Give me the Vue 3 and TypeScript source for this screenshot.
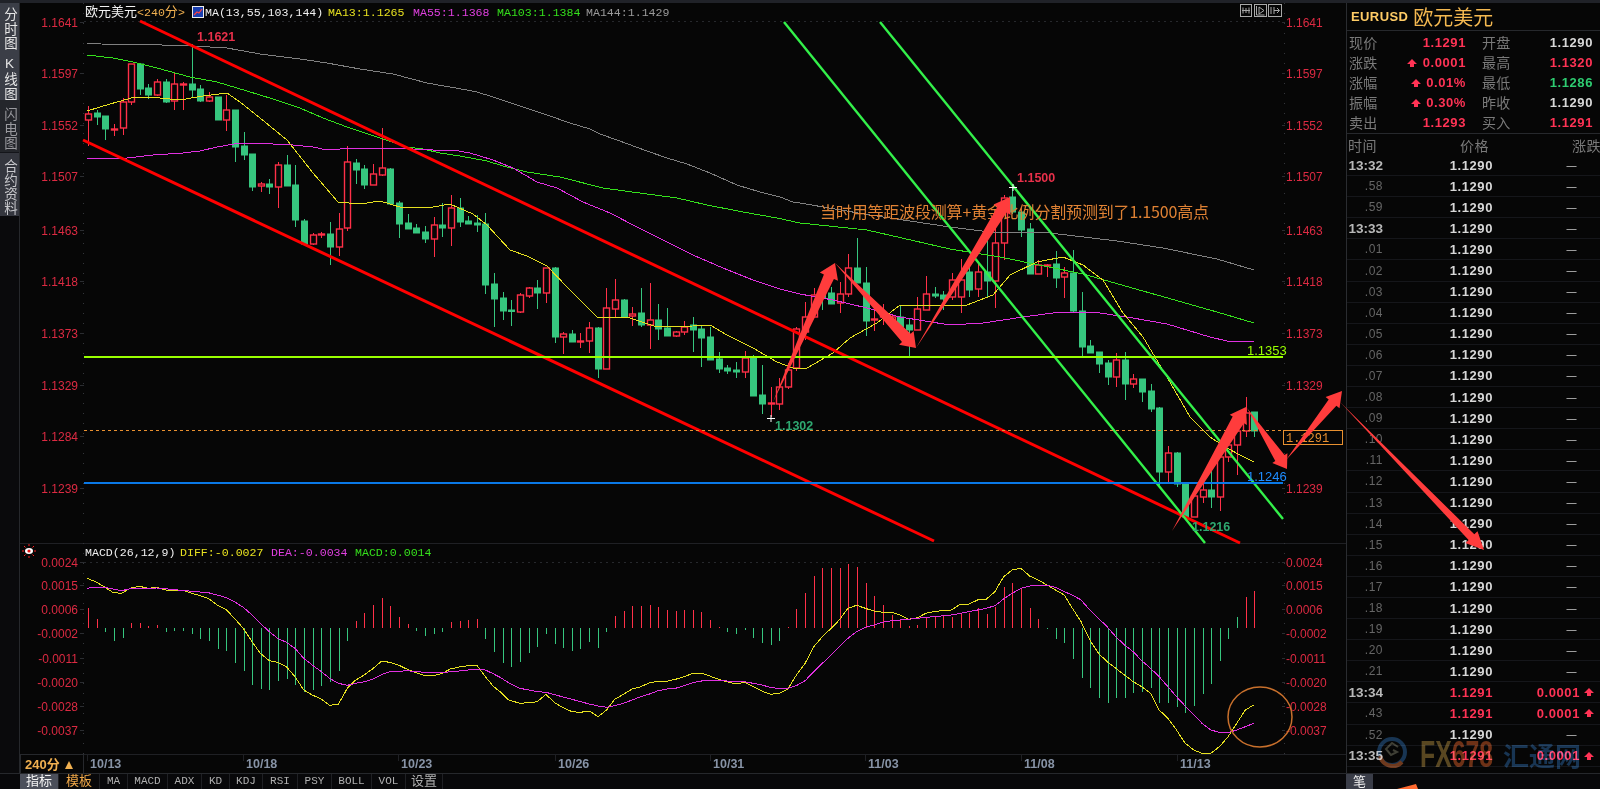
<script setup lang="ts">
// candle = [high, bodyTop, bodyBottom, low, isUp] in chart pixels
type Candle = [number, number, number, number, number]

const candleData: Candle[] = [
  [106, 114, 120, 146, 1], [110, 113, 117, 125, 0], [116, 116, 129, 140, 0], [124, 129, 129.5, 136, 1],
  [98, 102, 128, 135, 1], [64, 64, 102, 105, 1], [63, 64, 89, 95, 0], [84, 88, 95, 99, 0],
  [79, 82, 95, 96, 1], [79, 82, 102, 103, 0], [72, 84, 101, 110, 1], [82, 84, 84.5, 110, 1],
  [44, 84, 90, 98, 0], [85, 89, 101, 102, 0], [92, 97, 101, 102, 1], [97, 97, 120, 120, 0],
  [95, 110, 120, 131, 1], [110, 110, 147, 162, 0], [132, 146, 155, 160, 0], [154, 154, 187, 191, 0],
  [182, 184, 186, 192, 1], [179, 184, 187, 194, 0], [162, 165, 187, 208, 1], [155, 165, 186, 186, 0],
  [165, 185, 220, 227, 0], [219, 221, 244, 244, 0], [233, 235, 244, 245, 1], [232, 234, 235, 238, 1],
  [222, 234, 247, 265, 0], [213, 229, 247, 256, 1], [146, 162, 228, 231, 1], [159, 163, 170, 184, 0],
  [165, 169, 185, 189, 0], [164, 174, 185, 185, 1], [128, 168, 175, 176, 1], [168, 169, 204, 204, 0],
  [201, 203, 224, 238, 0], [214, 223, 229, 229, 0], [224, 228, 233, 233, 0], [226, 232, 239, 243, 0],
  [217, 225, 239, 257, 1], [203, 225, 228, 237, 0], [195, 208, 228, 246, 1], [198, 208, 222, 227, 0],
  [216, 221, 224, 224, 0], [215, 223, 225, 232, 0], [213, 224, 285, 294, 0], [273, 284, 299, 327, 0],
  [292, 298, 311, 320, 0], [300, 310, 311.5, 326, 0], [293, 295, 312, 313, 1], [287, 288, 296, 298, 1],
  [280, 288, 293, 309, 0], [268, 268, 293, 303, 1], [267, 268, 337, 343, 0], [332, 334, 337, 354, 1],
  [330, 334, 342, 342, 0], [333, 341, 341.5, 348, 1], [322, 328, 341, 353, 1], [327, 328, 369, 378, 0],
  [288, 308, 369, 369, 1], [279, 300, 309, 317, 1], [299, 300, 317, 317, 0], [307, 314, 316, 326, 1],
  [288, 313, 325, 327, 0], [283, 320, 325, 349, 1], [304, 320, 329, 340, 0], [308, 328, 336, 336, 0],
  [331, 332, 336, 337, 1], [321, 327, 332, 335, 1], [317, 325, 330, 352, 0], [326, 329, 338, 367, 0],
  [327, 337, 360, 360, 0], [352, 359, 369, 373, 0], [365, 368, 371, 374, 0], [362, 370, 372, 378, 0],
  [351, 358, 372, 378, 1], [355, 357, 396, 396, 0], [365, 395, 404, 414, 0], [387, 403, 404, 417, 1],
  [378, 387, 404, 410, 1], [363, 370, 387, 389, 1], [327, 329, 368, 371, 1], [302, 317, 332, 340, 1],
  [288, 295, 317, 317, 1], [288, 295, 298, 310, 0], [287, 293, 304, 304, 0], [282, 294, 303, 313, 1],
  [254, 268, 294, 297, 1], [238, 268, 283, 283, 0], [267, 283, 321, 336, 0], [307, 319, 320, 331, 1],
  [304, 315, 317, 325, 1], [315, 317, 320, 322, 1], [306, 317, 327, 330, 0], [318, 325, 330, 356, 0],
  [297, 309, 330, 330, 1], [276, 294, 310, 310, 1], [287, 294, 296, 298, 0], [291, 295, 299, 310, 0],
  [273, 280, 297, 300, 1], [259, 280, 297, 313, 1], [262, 272, 290, 297, 0], [263, 272, 289, 297, 1],
  [230, 272, 281, 298, 0], [213, 243, 281, 308, 1], [195, 198, 243, 260, 1], [187, 197, 212, 214, 0],
  [212, 212, 230, 237, 0], [223, 229, 274, 274, 0], [260, 265, 274, 274, 1], [264, 265, 266, 277, 1],
  [251, 264, 278, 288, 0], [267, 273, 277, 298, 1], [250, 273, 311, 313, 0], [292, 311, 347, 358, 0],
  [340, 346, 353, 353, 0], [352, 352, 364, 373, 0], [360, 363, 377, 385, 0], [353, 360, 377, 387, 1],
  [352, 360, 384, 400, 0], [374, 379, 384, 388, 1], [379, 379, 392, 402, 0], [384, 391, 409, 412, 0],
  [407, 408, 472, 485, 0], [446, 453, 472, 483, 1], [452, 453, 484, 487, 0], [483, 483, 517, 518, 0],
  [495, 496, 517, 517, 1], [483, 490, 497, 503, 1], [471, 490, 497, 508, 0], [457, 457, 497, 511, 1],
  [440, 445, 457, 462, 1], [430, 431, 445, 475, 1], [397, 413, 431, 437, 1], [412, 412, 431, 437, 0]
]

const STEP = 8.64
const X0 = 88
const barX = (i: number) => Math.round(X0 + i * STEP) + 0.5

const candles = candleData.map((c, i) => ({
  x: barX(i), high: c[0], top: c[1], bottom: c[2], low: c[3], up: c[4] === 1
}))

// MACD histogram: the y where each bar ends, baseline at 628
const MACD_ZERO = 628
const histEnds = [
  608, 619, 632, 641, 638, 623, 623, 626, 625, 632, 631, 631, 634, 639, 641, 649, 651, 663, 671, 685,
  689, 690, 681, 679, 685, 692, 690, 686, 682, 671, 641, 621, 613, 605, 598, 606, 617, 624, 631, 636,
  634, 632, 622, 621, 620, 619, 639, 652, 663, 667, 662, 653, 647, 634, 644, 648, 651, 649, 642, 648,
  632, 616, 611, 606, 606, 605, 607, 610, 611, 610, 610, 612, 620, 627, 632, 634, 630, 638, 643, 645,
  641, 627, 609, 593, 576, 568, 568, 568, 564, 567, 583, 596, 605, 615, 620, 626, 625, 618, 617, 615,
  617, 613, 613, 608, 614, 607, 587, 583, 588, 608, 619, 629, 639, 643, 659, 678, 688, 698, 703, 698,
  698, 693, 692, 688, 703, 703, 707, 713, 706, 694, 684, 661, 639, 617, 597, 591
]
const histBars = histEnds.map((y, i) => ({
  x: barX(i), y, up: y < MACD_ZERO && i !== 133
}))

const pts = (a: number[][]) => a.map((p) => p.join(',')).join(' ')

const ma144 = pts([
  [87, 43], [101, 44], [162, 45], [192, 46], [227, 48], [260, 54], [300, 59], [327, 63], [360, 69], [393, 74], [427, 83],
  [467, 90], [477, 92], [493, 97], [523, 107], [547, 115], [570, 123], [590, 129], [600, 134], [617, 140], [647, 151],
  [667, 158], [687, 164], [710, 173], [737, 185], [760, 192], [780, 197], [793, 202], [800, 203], [870, 215], [950, 227],
  [990, 232], [1050, 233], [1117, 241], [1163, 248], [1217, 259], [1254, 270]
])
const ma103 = pts([
  [87, 55], [113, 58], [133, 62], [157, 68], [190, 77], [217, 82], [247, 91], [273, 99], [300, 108], [323, 118],
  [347, 127], [377, 137], [407, 147], [423, 149], [440, 153], [460, 156], [487, 161], [503, 166], [527, 172], [560, 177],
  [603, 188], [647, 194], [677, 198], [707, 205], [743, 212], [777, 218], [800, 223], [867, 230], [950, 249], [1000, 257],
  [1083, 274], [1150, 293], [1217, 312], [1254, 323]
])
const ma55 = pts([
  [87, 158], [127, 158], [153, 155], [183, 153], [200, 151], [217, 147], [240, 143], [273, 144], [293, 145], [313, 147],
  [327, 150], [353, 148], [393, 148], [433, 150], [453, 150], [470, 153], [493, 160], [513, 168], [537, 182], [557, 188],
  [583, 202], [610, 213], [637, 227], [663, 240], [693, 255], [723, 268], [753, 280], [780, 289], [800, 294], [833, 300],
  [867, 308], [900, 317], [950, 325], [983, 323], [1023, 317], [1060, 312], [1093, 312], [1127, 317], [1167, 324],
  [1210, 337], [1227, 341], [1254, 342]
])
const ma13 = pts([
  [87, 111], [110, 104], [135, 97], [160, 98], [180, 100], [203, 96], [227, 93], [240, 102], [260, 118], [287, 140],
  [313, 173], [338, 202], [360, 204], [380, 201], [403, 208], [433, 207], [450, 204], [473, 214], [487, 225], [510, 250],
  [527, 256], [547, 266], [567, 287], [597, 317], [610, 317], [627, 317], [657, 327], [693, 326], [710, 325], [727, 335],
  [753, 348], [777, 362], [793, 368], [807, 368], [833, 353], [850, 338], [877, 323], [900, 305], [950, 305], [967, 305],
  [993, 295], [1010, 275], [1037, 262], [1063, 257], [1083, 265], [1103, 280], [1123, 313], [1143, 337], [1167, 377],
  [1190, 417], [1210, 437], [1227, 448], [1240, 455], [1254, 462]
])

// MACD lines were read off two crops of different scale
const fromLeft = (a: number[][]) => a.map(([x, y]) => [x / 3, 530 + y / 3])
const fromRight = (a: number[][]) => a.map(([x, y]) => [500 + x / 1.96, 540 + y / 3])
const round = (a: number[][]) => a.map(([x, y]) => [Math.round(x * 10) / 10, Math.round(y * 10) / 10])

const diffLine = pts(round([
  ...fromLeft([
    [262, 145], [290, 157], [315, 172], [340, 188], [365, 190], [390, 175], [418, 169], [445, 175], [470, 172], [497, 180],
    [525, 181], [550, 181], [575, 190], [600, 197], [625, 205], [652, 225], [680, 240], [703, 265], [730, 295], [756, 335],
    [781, 370], [808, 392], [833, 397], [859, 410], [885, 440], [911, 480], [937, 495], [964, 507], [989, 526], [1015, 523],
    [1042, 475], [1067, 450], [1093, 435], [1120, 415], [1144, 394], [1170, 397], [1195, 405], [1222, 418], [1249, 428],
    [1274, 437], [1300, 437], [1327, 430], [1351, 417], [1378, 411], [1404, 407], [1430, 405], [1456, 440], [1481, 470]
  ]),
  ...fromRight([
    [0, 455], [17, 480], [39, 490], [56, 488], [73, 485], [90, 463], [107, 488], [124, 503], [141, 515], [158, 517],
    [175, 513], [192, 530], [209, 510], [225, 478], [242, 463], [259, 447], [276, 440], [293, 428], [310, 424], [327, 424],
    [344, 418], [361, 410], [378, 400], [395, 400], [411, 408], [428, 418], [445, 425], [462, 432], [479, 427], [496, 440],
    [513, 453], [530, 463], [547, 460], [564, 447], [581, 405], [598, 370], [615, 320], [632, 290], [649, 265], [665, 240],
    [682, 205], [699, 196], [716, 205], [733, 213], [750, 217], [767, 217], [784, 225], [801, 238], [818, 233], [835, 220],
    [852, 214], [869, 212], [885, 210], [902, 193], [919, 192], [936, 180], [953, 178], [970, 155], [987, 110], [1004, 90],
    [1021, 85], [1038, 108], [1055, 120], [1072, 135], [1089, 150], [1106, 165], [1122, 205], [1139, 245], [1156, 300],
    [1173, 340], [1190, 365], [1207, 385], [1224, 405], [1241, 425], [1258, 440], [1275, 460], [1292, 510], [1309, 535],
    [1326, 570], [1343, 610], [1360, 630], [1376, 640], [1393, 640], [1410, 620], [1427, 590], [1444, 550], [1461, 510], [1477, 495]
  ])
]))

const deaLine = pts(round([
  ...fromLeft([
    [262, 175], [290, 171], [315, 172], [340, 177], [365, 182], [390, 176], [418, 175], [470, 174], [525, 179], [575, 184],
    [625, 188], [652, 195], [680, 203], [703, 215], [730, 232], [756, 255], [781, 280], [808, 305], [833, 325], [859, 337],
    [885, 355], [911, 385], [937, 405], [964, 425], [989, 445], [1015, 460], [1042, 466], [1067, 460], [1093, 455], [1120, 447],
    [1144, 434], [1170, 425], [1195, 424], [1222, 422], [1249, 425], [1274, 427], [1300, 427], [1327, 428], [1351, 425],
    [1378, 423], [1404, 420], [1430, 417], [1456, 420], [1481, 432]
  ]),
  ...fromRight([
    [0, 412], [17, 428], [39, 445], [56, 450], [73, 455], [90, 457], [107, 464], [124, 471], [141, 478], [158, 485], [175, 492],
    [192, 498], [209, 502], [225, 497], [242, 490], [259, 480], [276, 470], [293, 462], [310, 452], [327, 447], [344, 445],
    [361, 437], [378, 428], [395, 423], [411, 421], [428, 421], [445, 423], [462, 425], [479, 425], [496, 430], [513, 435],
    [530, 442], [547, 446], [564, 445], [581, 437], [598, 422], [615, 395], [632, 370], [649, 345], [665, 320], [682, 295],
    [699, 275], [716, 262], [733, 255], [750, 247], [767, 242], [784, 240], [801, 238], [818, 235], [835, 232], [852, 230],
    [869, 227], [885, 225], [902, 220], [919, 215], [936, 210], [953, 205], [970, 197], [987, 177], [1004, 160], [1021, 145],
    [1038, 138], [1055, 136], [1072, 136], [1089, 142], [1106, 155], [1122, 165], [1139, 180], [1156, 210], [1173, 235],
    [1190, 260], [1207, 290], [1224, 315], [1241, 335], [1258, 362], [1275, 385], [1292, 410], [1309, 440], [1326, 470],
    [1343, 498], [1360, 525], [1376, 550], [1393, 570], [1410, 577], [1427, 578], [1444, 570], [1461, 560], [1477, 550]
  ])
]))

const priceLabels = [
  { text: '1.1641', y: 22 }, { text: '1.1597', y: 73 }, { text: '1.1552', y: 125 }, { text: '1.1507', y: 176 },
  { text: '1.1463', y: 230 }, { text: '1.1418', y: 281 }, { text: '1.1373', y: 333 }, { text: '1.1329', y: 385 },
  { text: '1.1284', y: 436 }, { text: '1.1239', y: 488 }
]
const macdLabels = [
  { text: '0.0024', y: 562 }, { text: '0.0015', y: 585 }, { text: '0.0006', y: 609 }, { text: '-0.0002', y: 633 },
  { text: '-0.0011', y: 658 }, { text: '-0.0020', y: 682 }, { text: '-0.0028', y: 706 }, { text: '-0.0037', y: 730 }
]
const axisLabels = [...priceLabels, ...macdLabels]
// the right axis has the last price tag where 1.1284 would be
const rightLabels = axisLabels.filter((l) => l.text !== '1.1284')

const dates = [
  { text: '10/13', x: 87 }, { text: '10/18', x: 243 }, { text: '10/23', x: 398 }, { text: '10/26', x: 555 },
  { text: '10/31', x: 710 }, { text: '11/03', x: 865 }, { text: '11/08', x: 1021 }, { text: '11/13', x: 1177 }
]

// tapered hand-drawn arrow as a polygon
function arrow(x1: number, y1: number, x2: number, y2: number, shaft = 5, head = 9, len = 16): string {
  const d = Math.hypot(x2 - x1, y2 - y1)
  const ux = (x2 - x1) / d
  const uy = (y2 - y1) / d
  const nx = -uy
  const ny = ux
  const bx = x2 - ux * len
  const by = y2 - uy * len
  const p = [
    [x1, y1],
    [bx + nx * shaft, by + ny * shaft],
    [bx + nx * head, by + ny * head],
    [x2, y2],
    [bx - nx * head, by - ny * head],
    [bx - nx * shaft, by - ny * shaft]
  ]
  return pts(round(p))
}

const arrows = [
  arrow(773, 402, 835, 263, 5.5, 10, 15),
  arrow(835, 263, 916, 348, 6, 10, 14),
  arrow(916, 348, 1010, 197, 5.5, 10, 15),
  arrow(1172, 531, 1246, 407, 6.5, 10, 15),
  arrow(1247, 408, 1287, 469, 5.5, 9, 13),
  arrow(1286, 460, 1342, 391, 5, 9, 15),
  arrow(1340, 402, 1484, 550, 4, 8.5, 18)
]

interface Quote { label: string; value: string; color: string; arrow?: boolean }
const quotes: Quote[][] = [
  [{ label: '现价', value: '1.1291', color: 'red' }, { label: '开盘', value: '1.1290', color: 'white' }],
  [{ label: '涨跌', value: '0.0001', color: 'red', arrow: true }, { label: '最高', value: '1.1320', color: 'red' }],
  [{ label: '涨幅', value: '0.01%', color: 'red', arrow: true }, { label: '最低', value: '1.1286', color: 'green' }],
  [{ label: '振幅', value: '0.30%', color: 'red', arrow: true }, { label: '昨收', value: '1.1290', color: 'white' }],
  [{ label: '卖出', value: '1.1293', color: 'red' }, { label: '买入', value: '1.1291', color: 'red' }]
]

interface Tick { time: string; minute?: boolean; up?: boolean }
const ticks: Tick[] = [
  { time: '13:32', minute: true }, { time: '.58' }, { time: '.59' }, { time: '13:33', minute: true },
  { time: '.01' }, { time: '.02' }, { time: '.03' }, { time: '.04' }, { time: '.05' }, { time: '.06' },
  { time: '.07' }, { time: '.08' }, { time: '.09' }, { time: '.10' }, { time: '.11' }, { time: '.12' },
  { time: '.13' }, { time: '.14' }, { time: '.15' }, { time: '.16' }, { time: '.17' }, { time: '.18' },
  { time: '.19' }, { time: '.20' }, { time: '.21' }, { time: '13:34', minute: true, up: true },
  { time: '.43', up: true }, { time: '.52' }, { time: '13:35', minute: true, up: true }
]

const railTabs = [
  { text: '分时图', cls: 'tab-light' },
  { text: 'K线图', cls: 'tab-light' },
  { text: '闪电图', cls: 'tab-dim' },
  { text: '合约资料', cls: 'tab-mid' }
]

const bottomTabs = [
  { text: '指标', width: 39, cls: 'active' },
  { text: '模板', width: 41, cls: 'orange' },
  { text: 'MA', width: 28, cls: '' },
  { text: 'MACD', width: 40, cls: '' },
  { text: 'ADX', width: 34, cls: '' },
  { text: 'KD', width: 28, cls: '' },
  { text: 'KDJ', width: 33, cls: '' },
  { text: 'RSI', width: 35, cls: '' },
  { text: 'PSY', width: 34, cls: '' },
  { text: 'BOLL', width: 40, cls: '' },
  { text: 'VOL', width: 34, cls: '' },
  { text: '设置', width: 37, cls: '' }
]
</script>

<template>
  <div class="terminal">
    <div class="top-strip"></div>

    <div class="workspace">
      <!-- Left Rail -->
      <nav class="rail">
        <div v-for="tab in railTabs" :key="tab.text" :class="['rail-tab', tab.cls]">{{ tab.text }}</div>
        <div class="rail-rest"></div>
      </nav>

      <!-- Chart -->
      <div class="chart">
        <svg class="chart-svg" width="1326" height="771" viewBox="20 3 1326 771">
          <!-- frame lines -->
          <line x1="20" y1="543.5" x2="1346" y2="543.5" class="frame" />
          <line x1="20" y1="754.5" x2="1346" y2="754.5" class="frame" />
          <line x1="83.5" y1="3" x2="83.5" y2="774" class="axis-dots" />
          <line x1="1284.5" y1="3" x2="1284.5" y2="754" class="axis-dots" />
          <line x1="84" y1="21.5" x2="1284" y2="21.5" class="grid-dash" />
          <line x1="84" y1="562.5" x2="1284" y2="562.5" class="grid-dash" />
          <line v-for="l in axisLabels" :key="'t' + l.text" x1="80" :y1="l.y + 0.5" x2="84" :y2="l.y + 0.5" class="tick" />
          <line v-for="l in rightLabels" :key="'u' + l.text" x1="1282" :y1="l.y + 0.5" x2="1285" :y2="l.y + 0.5" class="tick" />

          <!-- header -->
          <text x="85" y="16" class="head white"><tspan class="cjk">欧元美元</tspan><tspan class="orange-fill">&lt;240<tspan class="cjk">分</tspan>&gt;</tspan></text>
          <g>
            <rect x="192.5" y="6.5" width="11" height="11" fill="#1a3fb0" stroke="#eee" />
            <path d="M194 15l3-3 2 1 3-4" fill="none" stroke="#ff4040" stroke-width="1.2" />
          </g>
          <text x="205" y="16" class="head white">MA(13,55,103,144)</text>
          <text x="328" y="16" class="head yellow">MA13:1.1265</text>
          <text x="413" y="16" class="head magenta">MA55:1.1368</text>
          <text x="497" y="16" class="head green-t">MA103:1.1384</text>
          <text x="586" y="16" class="head grey">MA144:1.1429</text>

          <g class="tool" transform="translate(1240 4)">
            <rect x="0.5" y="0.5" width="11" height="12" />
            <path d="M2 6.5h8M3 3.5v6M9 3.5v6M6 4v5" />
          </g>
          <g class="tool" transform="translate(1254 4)">
            <rect x="0.5" y="0.5" width="12" height="12" />
            <path d="M2.5 2v9h8M5 3l5 3.5-5 3.5z" />
          </g>
          <g class="tool" transform="translate(1268 4)">
            <rect x="0.5" y="0.5" width="13" height="12" />
            <path d="M3 3v7M6 3v7M6 6.5h5M9 4l2.5 2.5L9 9" />
          </g>

          <!-- candles -->
          <g v-for="(c, i) in candles" :key="i" :class="c.up ? 'candle-up' : 'candle-down'">
            <line :x1="c.x" :y1="c.high" :x2="c.x" :y2="c.top" class="wick" />
            <line :x1="c.x" :y1="c.bottom" :x2="c.x" :y2="c.low" class="wick" />
            <rect :x="c.x - 3" :y="c.top" width="6" :height="Math.max(c.bottom - c.top, 1)" class="body" />
          </g>

          <!-- moving averages -->
          <polyline :points="ma144" class="ma" stroke="#808080" />
          <polyline :points="ma103" class="ma" stroke="#35e01c" />
          <polyline :points="ma55" class="ma" stroke="#e030e0" />
          <polyline :points="ma13" class="ma" stroke="#e6e020" />

          <!-- drawn trend lines -->
          <line x1="140" y1="21" x2="1240" y2="543" class="trend" stroke="#ff0000" />
          <line x1="83" y1="140" x2="934" y2="541" class="trend" stroke="#ff0000" />
          <line x1="880" y1="22" x2="1283" y2="519" class="trend-thin" stroke="#33f04a" />
          <line x1="784" y1="22" x2="1205" y2="543" class="trend-thin" stroke="#33f04a" />
          <line x1="84" y1="357" x2="1283" y2="357" class="level" stroke="#99ff00" />
          <line x1="84" y1="483" x2="1283" y2="483" class="level" stroke="#0a78e6" />
          <line x1="84" y1="430.5" x2="1283" y2="430.5" class="last-price" />
          <rect x="1283.5" y="430.5" width="59" height="14" class="price-tag" />
          <text x="1286" y="441.5" class="tag-text">1.1291</text>

          <text x="1247" y="355" class="level-label" fill="#99ff00">1.1353</text>
          <text x="1247" y="481" class="level-label" fill="#1e8cff">1.1246</text>

          <!-- high / low marks -->
          <text x="197" y="41" class="mark" fill="#e8304a">1.1621</text>
          <text x="1017" y="182" class="mark" fill="#e8304a">1.1500</text>
          <text x="775" y="430" class="mark" fill="#2ea870">1.1302</text>
          <text x="1192" y="531" class="mark" fill="#2ea870">1.1216</text>
          <path d="M767 418.5h8M771 415v7M1009 187.5h8M1013 184v7" stroke="#fff" fill="none" />

          <text x="820" y="218" class="note" textLength="389">当时用等距波段测算+黄金比例分割预测到了1.1500高点</text>

          <!-- macd -->
          <g :transform="'translate(29 551)'">
            <ellipse rx="4" ry="3" fill="#fff" />
            <circle r="1.6" fill="#e01010" />
            <path d="M0-7v2M0 5v2M-7 0h2M5 0h2M-5-5l1.5 1.5M5-5l-1.5 1.5M-5 5l1.5-1.5M5 5l-1.5-1.5" stroke="#ff2020" fill="none" />
          </g>
          <text x="85" y="556" class="head white">MACD(26,12,9)</text>
          <text x="180" y="556" class="head yellow">DIFF:-0.0027</text>
          <text x="271" y="556" class="head magenta">DEA:-0.0034</text>
          <text x="355" y="556" class="head green-t">MACD:0.0014</text>

          <line
            v-for="(b, i) in histBars"
            :key="'h' + i"
            :x1="b.x"
            :y1="b.y"
            :x2="b.x"
            :y2="MACD_ZERO"
            :stroke="b.up ? '#ff3048' : '#36c67e'"
          />
          <polyline :points="diffLine" class="ma" stroke="#e6e020" />
          <polyline :points="deaLine" class="ma" stroke="#e030e0" />

          <!-- axes text -->
          <text v-for="l in axisLabels" :key="'l' + l.text" x="78" :y="l.y + 4.5" class="axis-text" text-anchor="end">{{ l.text }}</text>
          <text v-for="l in rightLabels" :key="'r' + l.text" x="1286" :y="l.y + 4.5" class="axis-text">{{ l.text }}</text>

          <!-- dates -->
          <template v-for="d in dates" :key="d.text">
            <line :x1="d.x + 0.5" y1="755" :x2="d.x + 0.5" y2="761" class="frame" />
            <text :x="d.x + 3" y="768" class="date">{{ d.text }}</text>
          </template>

          <rect x="20.5" y="754.5" width="63" height="19" class="period-box" />
          <text x="25" y="769" class="period">240分</text>
          <path d="M65 769l4-8 4 8z" fill="#f0b050" />
        </svg>
      </div>

      <!-- Quote Panel -->
      <aside class="panel">
        <header class="panel-title">
          <span class="symbol">EURUSD</span>
          <span class="symbol-name">欧元美元</span>
        </header>

        <div class="quotes">
          <div v-for="(row, r) in quotes" :key="r" class="quote-row">
            <template v-for="q in row" :key="q.label">
              <span class="quote-label">{{ q.label }}</span>
              <span :class="['quote-value', q.color]">
                <svg v-if="q.arrow" class="up-arrow" width="10" height="8" viewBox="0 0 10 8">
                  <path d="M5 0l5 5H7v3H3V5H0z" />
                </svg>
                {{ q.value }}
              </span>
            </template>
          </div>
        </div>

        <div class="tick-head">
          <span>时间</span>
          <span>价格</span>
          <span>涨跌</span>
        </div>
        <div class="tick-list">
          <div v-for="(t, i) in ticks" :key="i" class="tick-row">
            <span :class="t.minute ? 'tick-minute' : 'tick-second'">{{ t.time }}</span>
            <span :class="['tick-price', t.up ? 'red' : 'white']">{{ t.up ? '1.1291' : '1.1290' }}</span>
            <span v-if="t.up" class="tick-change red">0.0001</span>
            <span v-else class="tick-change dash">—</span>
            <svg v-if="t.up" class="up-arrow" width="10" height="8" viewBox="0 0 10 8">
              <path d="M5 0l5 5H7v3H3V5H0z" />
            </svg>
          </div>
        </div>
      </aside>
    </div>

    <!-- Bottom Tabs -->
    <footer class="tabbar">
      <div class="tabs-left">
        <span
          v-for="tab in bottomTabs"
          :key="tab.text"
          :class="['bottom-tab', tab.cls]"
          :style="{ width: tab.width + 'px' }"
        >{{ tab.text }}</span>
      </div>
      <span class="pen-tab">笔</span>
    </footer>

    <!-- Annotations and watermark lying over everything -->
    <svg class="overlay" width="1600" height="789" viewBox="0 0 1600 789">
      <polygon v-for="(a, i) in arrows" :key="i" :points="a" fill="#ff3c3c" />
      <ellipse cx="1260" cy="717" rx="32" ry="30" fill="none" stroke="#c8702c" stroke-width="1.5" />
      <polygon points="1397,789 1416,784 1418,789" fill="#ff6a30" />
      <g class="watermark">
        <circle cx="1392" cy="752" r="13" fill="none" stroke="#12304f" stroke-width="4" />
        <path d="M1380 756a13 13 0 0 0 22 6" fill="none" stroke="#6a3418" stroke-width="4" />
        <path d="M1398 747l-6-4-6 6 5 6 6-3-4-2" fill="none" stroke="#3a3a30" stroke-width="2" />
        <text x="1420" y="767" class="wm-latin" textLength="73" lengthAdjust="spacingAndGlyphs">
          <tspan fill="#55431c">FX</tspan><tspan fill="#6a2c10">678</tspan>
        </text>
        <text x="1503" y="766" class="wm-cjk">汇通网</text>
      </g>
    </svg>
  </div>
</template>

<style scoped>
.terminal {
  position: relative;
  width: 1600px;
  height: 789px;
  display: flex;
  flex-direction: column;
  overflow: hidden;
  background: #060606;
  font-family: "Liberation Sans", "Noto Sans CJK SC", sans-serif;
}

.top-strip {
  height: 3px;
  flex-shrink: 0;
  background: #202228;
}

.workspace {
  flex: 1;
  display: flex;
  min-height: 0;
}

/* LEFT RAIL */
.rail {
  width: 20px;
  flex-shrink: 0;
  display: flex;
  flex-direction: column;
  background: #14151a;
  border-right: 1px solid #26282c;
  box-sizing: border-box;
}

.rail-tab {
  display: flex;
  align-items: center;
  justify-content: flex-start;
  box-sizing: border-box;
  writing-mode: vertical-lr;
  text-orientation: upright;
  white-space: nowrap;
  font-size: 13.5px;
  letter-spacing: 1.2px;
  line-height: 19px;
  width: 19px;
}

.tab-light {
  height: 48.5px;
  padding-top: 4px;
  background: #3b3e47;
  color: #e6e6e6;
}

.tab-dim {
  height: 52px;
  padding-top: 7px;
  color: #9a9a9f;
  background: #24262b;
  margin-bottom: 1px;
}

.tab-mid {
  height: 63px;
  padding-top: 6px;
  letter-spacing: 0.6px;
  color: #c8c8cc;
  background: #34363e;
}

.rail-rest {
  flex: 1;
  background: #0a0a0c;
}

/* CHART */
.chart {
  width: 1326px;
  flex-shrink: 0;
}

.chart-svg {
  display: block;
}

.frame {
  stroke: #1f2024;
}

.axis-dots {
  stroke: #33353a;
  stroke-dasharray: 1 9;
}

.grid-dash {
  stroke: #26282c;
  stroke-dasharray: 2 4;
}

.tick {
  stroke: #2a2c30;
}

.head {
  font-family: "Liberation Mono", "Noto Sans CJK SC", monospace;
  font-size: 11.6px;
}

.head .cjk {
  font-size: 13px;
}

.white { fill: #f0f0f0; }
.orange-fill { fill: #f0b050; }
.yellow { fill: #e6e020; }
.magenta { fill: #e040e0; }
.green-t { fill: #35e01c; }
.grey { fill: #9a9a9a; }

.tool rect,
.tool path {
  fill: none;
  stroke: #a8a8a8;
}

.candle-up .wick {
  stroke: #ff3048;
}

.candle-up .body {
  fill: #060606;
  stroke: #ff3048;
  stroke-width: 1.4;
}

.candle-down .wick {
  stroke: #36c67e;
}

.candle-down .body {
  fill: #36c67e;
  stroke: #36c67e;
  stroke-width: 1;
}

.ma {
  fill: none;
  stroke-width: 1;
  shape-rendering: crispEdges;
}

.trend {
  stroke-width: 3;
}

.trend-thin {
  stroke-width: 2.4;
}

.level {
  stroke-width: 2;
}

.last-price {
  stroke: #e89030;
  stroke-dasharray: 3 3;
}

.price-tag {
  fill: #060606;
  stroke: #e89030;
}

.tag-text {
  font-family: "Liberation Mono", monospace;
  font-size: 12px;
  fill: #e89030;
}

.level-label {
  font-size: 13px;
}

.mark {
  font-size: 12.5px;
  font-weight: 700;
}

.note {
  font-family: "Noto Sans CJK SC", sans-serif;
  font-size: 16px;
  fill: #e08234;
}

.axis-text {
  font-size: 12px;
  fill: #dc2a42;
}

.date {
  font-size: 12.5px;
  font-weight: 700;
  fill: #8793a6;
}

.period-box {
  fill: #060606;
  stroke: #26282c;
}

.period {
  font-size: 13px;
  font-weight: 700;
  fill: #f0b050;
}

/* QUOTE PANEL */
.panel {
  flex: 1;
  min-width: 0;
  border-left: 1px solid #2a2c30;
  background: #060606;
  overflow: hidden;
}

.panel-title {
  height: 27px;
  display: flex;
  align-items: center;
  gap: 5px;
  padding-left: 4px;
  border-bottom: 1px solid #26282c;
}

.symbol {
  font-size: 13px;
  font-weight: 700;
  letter-spacing: 0.4px;
  color: #ffcc66;
}

.symbol-name {
  font-family: "Noto Sans CJK SC", sans-serif;
  font-size: 20px;
  color: #f4b850;
}

.quotes {
  padding: 1px 0 1px 2px;
  border-bottom: 1px solid #26282c;
}

.quote-row {
  height: 20px;
  display: grid;
  grid-template-columns: 40px 77px 16px 40px 71px;
  align-items: center;
}

.quote-label {
  font-size: 14px;
  color: #7a7a7a;
  letter-spacing: 0.3px;
}

.quote-row .quote-label:nth-of-type(3) {
  grid-column: 4;
}

.quote-value {
  font-size: 13px;
  font-weight: 700;
  letter-spacing: 0.6px;
  text-align: right;
  white-space: nowrap;
}

.up-arrow {
  fill: #ff3355;
  margin-right: 1px;
}

.red { color: #ff3355; }
.white { color: #d8d8d8; }
.green { color: #2ecc71; }

.tick-head {
  height: 21px;
  display: grid;
  grid-template-columns: 112px 91px 1fr;
  align-items: center;
  font-size: 14px;
  color: #7a7a7a;
  letter-spacing: 0.4px;
  padding-left: 1px;
  white-space: nowrap;
}

.tick-head span:last-child {
  padding-left: 21px;
}

.tick-row {
  height: 21.1px;
  display: grid;
  grid-template-columns: 36px 110px 87px 14px;
  align-items: center;
  box-sizing: border-box;
  border-bottom: 1px solid #15161a;
}

.tick-minute {
  font-size: 13.5px;
  font-weight: 700;
  color: #b8b8b8;
  text-align: right;
}

.tick-second {
  font-size: 12px;
  letter-spacing: 0.5px;
  color: #666;
  text-align: right;
}

.tick-price {
  font-size: 13px;
  font-weight: 700;
  letter-spacing: 0.6px;
  text-align: right;
}

.tick-change {
  font-size: 13px;
  font-weight: 700;
  letter-spacing: 0.6px;
  text-align: right;
}

.tick-change.dash {
  font-size: 10px;
  font-weight: 400;
  color: #c8c8c8;
  padding-right: 3px;
}

.tick-row .up-arrow {
  margin-left: 4px;
}

/* BOTTOM TABS */
.tabbar {
  height: 16px;
  flex-shrink: 0;
  display: flex;
  padding-left: 20px;
  border-top: 1px solid #26282c;
  box-sizing: border-box;
  background: #08080a;
}

.tabs-left {
  width: 1326px;
  display: flex;
}

.bottom-tab {
  display: flex;
  align-items: center;
  justify-content: center;
  box-sizing: border-box;
  border-right: 1px solid #1f2024;
  font-family: "Liberation Mono", "Noto Sans CJK SC", monospace;
  font-size: 11px;
  line-height: 15px;
  color: #b0b0b0;
}

.bottom-tab.active {
  background: #4b4f5a;
  color: #f4f4f4;
  font-size: 13px;
}

.bottom-tab.orange {
  color: #f0a848;
  font-size: 13px;
}

.bottom-tab:last-child {
  font-size: 13px;
}

.pen-tab {
  width: 27px;
  display: flex;
  align-items: center;
  justify-content: center;
  background: #3a3d48;
  color: #eee;
  font-size: 13px;
  line-height: 15px;
}

/* OVERLAY */
.overlay {
  position: absolute;
  left: 0;
  top: 0;
  pointer-events: none;
}

.watermark {
  mix-blend-mode: screen;
}

.wm-latin {
  font-size: 36px;
  font-weight: 700;
}

.wm-cjk {
  font-family: "Noto Sans CJK SC", sans-serif;
  font-size: 26px;
  font-weight: 700;
  fill: #12304f;
}
</style>

<style>
html,
body {
  margin: 0;
  background: #060606;
}
</style>
